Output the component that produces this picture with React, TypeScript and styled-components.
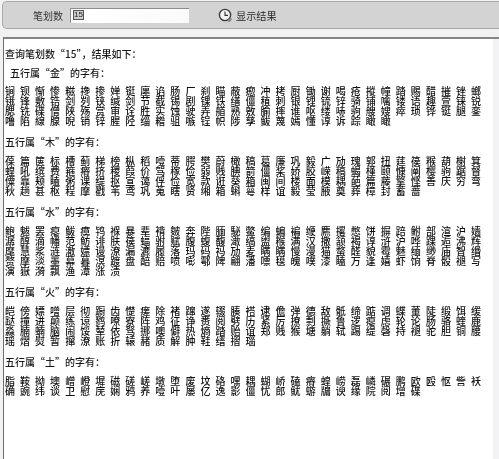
import React from "react";
import styled, { createGlobalStyle } from "styled-components";

const Global = createGlobalStyle`
  html, body { margin: 0; padding: 0; background: #f2f2f2; }
  #root { width: 499px; height: 459px; overflow: hidden; }
`;

const Page = styled.div`
  width: 499px;
  height: 459px;
  display: flex;
  flex-direction: column;
  overflow: hidden;
  background: #f2f2f2;
  font-family: "Noto Sans CJK SC", "Liberation Sans", sans-serif;
  color: #1a1a1a;
  filter: blur(0.25px);
`;

const Toolbar = styled.div`
  flex: none;
  height: 26px;
  margin: 1px 0 0 2px;
  display: flex;
  align-items: center;
  background: #d3d3d3;
  border: 1px solid #a9a9a9;
  border-right: none;
  border-radius: 5px 0 0 5px;
`;

const Label = styled.span`
  margin-left: 30px;
  font-size: 10px;
  width: 37px;
  color: #333;
`;

const Field = styled.div`
  width: 119px;
  height: 15px;
  box-sizing: border-box;
  padding: 1px 0 0 2px;
  display: flex;
  align-items: flex-start;
  border-top: 1px solid #8e8e8e;
  border-left: 1px solid #8e8e8e;
  background: linear-gradient(90deg, #ffffff, #fafafa);
`;

const FieldValue = styled.span`
  width: 11px;
  height: 10px;
  line-height: 10px;
  box-sizing: border-box;
  border: 1px solid #555;
  background: #cfcfcf;
  font: 8px/8px "Liberation Sans", sans-serif;
  text-align: center;
  color: #222;
`;

const Action = styled.button`
  margin-left: 29px;
  padding: 0;
  display: flex;
  align-items: center;
  gap: 3px;
  border: none;
  background: transparent;
  font: inherit;
  font-size: 10.2px;
  color: #2a2a2a;
`;

const Strip = styled.div`
  flex: none;
  height: 8px;
  background: #f1f1f1;
`;

const Result = styled.div`
  flex: 1;
  margin-left: 3px;
  display: flex;
  border-top: 2px solid #858585;
  border-left: 1px solid #6f6f6f;
  background: #fff;
`;

const Content = styled.div`
  width: 488px;
  padding-top: 9px;
  padding-left: 1px;
`;

const Scroll = styled.div`
  flex: 1;
  background: #f3f3f5;
`;

const Intro = styled.div`
  height: 12px;
  line-height: 12px;
  font-size: 10px;
  font-weight: 500;
  white-space: pre;
`;

const Heading = styled.div<{ $indent: number; $gap: number }>`
  height: 12px;
  line-height: 12px;
  font-size: 10px;
  font-weight: 500;
  white-space: pre;
  margin-top: ${(p) => p.$gap}px;
  padding-left: ${(p) => p.$indent}px;
`;

const Rows = styled.div<{ $gap: number }>`
  margin-top: ${(p) => p.$gap}px;
`;

const Row = styled.div`
  display: grid;
  grid-template-columns: repeat(32, 15.04px);
  height: 10px;
`;

const Char = styled.span`
  display: block;
  height: 10px;
  line-height: 10px;
  font-family: "Liberation Serif", "Noto Sans CJK SC", serif;
  font-size: 10px;
  font-weight: 500;
  color: #111;
`;

const Clock = () => (
  <svg width="15" height="15" viewBox="0 0 15 15" aria-hidden="true">
    <circle cx="7" cy="7" r="5.6" fill="#f4f4f4" stroke="#3a3a3a" strokeWidth="1.4" />
    <path d="M7 3.4V7.4H10" fill="none" stroke="#333" strokeWidth="1.1" />
    <path d="M9 12.5l4-3 1 2-3 3z" fill="#8a8a8a" />
  </svg>
);

const sections = [
  {
    title: "五行属“金”的字有：",
    indent: 5,
    headGap: 7,
    rowGap: 8,
    rows: [
      "锏钡惭惨糍搀掺婵铤廛谄肠厂刹瞄蔽瘛冲拷厨锄谢喝疮摐幢踏赐醋摧锉螂",
      "锇锋敷锆剑刿铗缄剑节截锡剧锞铁缮僵稙刺银锂锍锌骑铺噙镂语趣萱铼锐",
      "腮铣碟僧陕殇赏审诠胜实蚀驶弄艏熟敫腧摔谁呕缕哧驹艘嫂瘁琐铧铤腿銮",
      "噜陷線腺唲销锌腥陉缁糌驵嗾锃帜陟孳鲅蔑嫣懂谆诉踪瞰瞰",
    ],
  },
  {
    title: "五行属“木”的字有：",
    indent: 0,
    headGap: 9,
    rowGap: 9,
    rows: [
      "葆篇箧标槽蓟梯榜枞稻噎蒂腭樊蔚橄稿葛廉巩毅广劢瑰郭扭莛篌糇葫榭箕",
      "蝗吼缤费箍瘠挤稷葭价驾稼俭弱贱腆箭僵桨娇胶嵘稿蝎槿颐慷阐樱驹踞督",
      "僳靠颊瞌粥课缇抠宣蔼俘俭宽款诳葵箱闽间楼面模耦葩篇藤擎悭善庆穷弯",
      "秋趟甚枢程摩戳苇鸢巩蒐瞎贤缃箱蝌萼样谊毅莹腋奠葬樟封蓄蔷",
    ],
  },
  {
    title: "五行属“水”的字有：",
    indent: 0,
    headGap: 9,
    rowGap: 9,
    rows: [
      "鲍魃罢瘪鲅瘼鸨褓暴辈褙皴奔陛腼駜鳖编蝙褊缏麃撂憋饼摒踣鲋部渲沪嫱",
      "潺醇滴幡范鲂诽肤篌蝠驸赋腹蝮馥澉缟盥糇满汉撒颔褐谆浒沪哗踝逅沸辉",
      "麾慧浆涟澈嫖谩潦漏瀌履落玛码祃劢麦瞒瞒慢漫猫蝥醛貌霉魅缅缈庙智缗",
      "赘摩淡墨幕暮溟踱盘醅赔喷嘭鄠陴翩潘嘌氁魄噗漆瞌万逢嬉虾饷脊骰褪写",
      "演嶽漪飘渔潭涨渍",
    ],
  },
  {
    title: "五行属“火”的字有：",
    indent: 0,
    headGap: 9,
    rowGap: 9,
    rows: [
      "皑傍嫖噌层彻蹰齿憷瘥除褚蹿遂辍腠褡逮儋弹德敌骶缔踮调蝶董陡缎饵缓",
      "跶撞进颠练谅鹨嘹寮阵鸡征诤赉阅劈历紧厉撩剽撅鲁逻瘪虑轮论肠骆蝰鹿",
      "淼腩蝻脑闹馁辇依驽挪噢僻热熵踏贻谊郑贱猴塘躺轼踢缇磬持褪驼胆铜腰",
      "瑶熠熨暂撺潦账折辕赭质解肿鞋缙摺瑙",
    ],
  },
  {
    title: "五行属“土”的字有：",
    indent: 0,
    headGap: 9,
    rowGap: 9,
    rows: [
      "脂鞍拗墺嶒嶝墀磁磋嵯墩堕废坟硌嘿耦蝴峤磕瘠蝗崂磊嶙碾鹏欧殴怄訾袄",
      "确豌纬谈卫慰庑娴鸦养噎叶屡亿逸影僵忧郎鱿蝣牖谀缘院阅增碟",
    ],
  },
];

export default function App() {
  return (
    <Page>
      <Global />
      <Toolbar>
        <Label>笔划数</Label>
        <Field>
          <FieldValue>15</FieldValue>
        </Field>
        <Action type="button">
          <Clock />
          显示结果
        </Action>
      </Toolbar>
      <Strip />
      <Result>
        <Content>
          <Intro>查询笔划数“15”，结果如下：</Intro>
          {sections.map((section) => (
            <React.Fragment key={section.title}>
              <Heading $indent={section.indent} $gap={section.headGap}>
                {section.title}
              </Heading>
              <Rows $gap={section.rowGap}>
                {section.rows.map((row, i) => (
                  <Row key={i}>
                    {Array.from(row).map((ch, j) => (
                      <Char key={j}>{ch}</Char>
                    ))}
                  </Row>
                ))}
              </Rows>
            </React.Fragment>
          ))}
        </Content>
        <Scroll />
      </Result>
    </Page>
  );
}
